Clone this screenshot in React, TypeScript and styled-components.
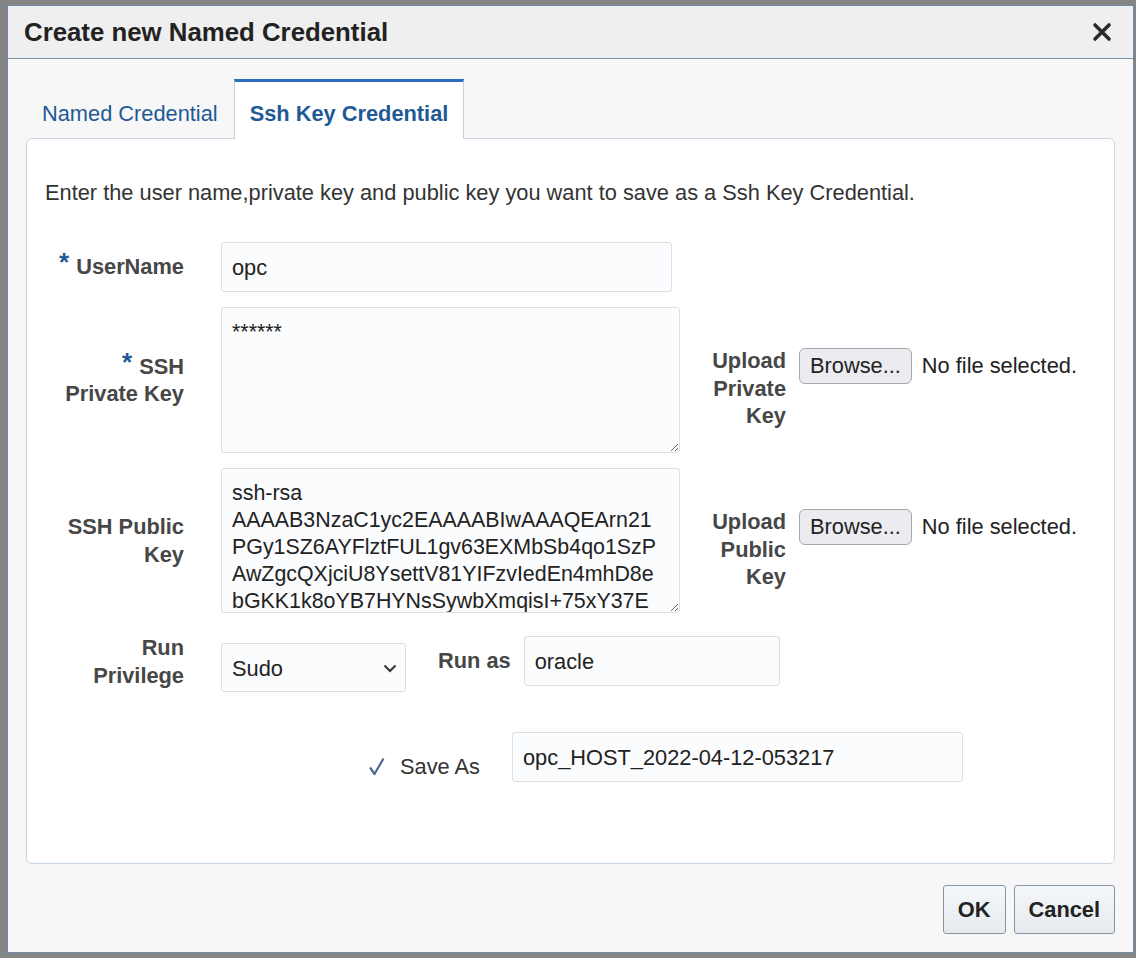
import { ReactElement } from "react";
import styled, { createGlobalStyle } from "styled-components";

const GlobalStyle = createGlobalStyle`
  * {
    box-sizing: border-box;
  }
  html,
  body {
    margin: 0;
    padding: 0;
  }
  body {
    font-family: "Liberation Sans", Arial, Helvetica, sans-serif;
    font-size: 21.8px;
    color: #333;
  }
`;

const Backdrop = styled.div`
  width: 100vw;
  height: 100vh;
  padding: 5px 2px 5px 7px;
  background: #858585;
  display: flex;
`;

const Dialog = styled.section`
  flex: 1;
  display: flex;
  flex-direction: column;
  border: 1px solid #6f8aa8;
  background: #f7f7f7;
`;

const TitleBar = styled.header`
  height: 53px;
  display: flex;
  align-items: center;
  justify-content: space-between;
  padding: 0 21px 0 16px;
  background: #efefef;
  border-bottom: 1px solid #7a93ad;
`;

const Title = styled.h1`
  margin: 0;
  font-size: 25.8px;
  line-height: 52px;
  font-weight: bold;
  color: #222;
`;

const CloseButton = styled.button`
  width: 20px;
  height: 20px;
  padding: 0;
  border: 0;
  background: none;
  display: flex;
  align-items: center;
  justify-content: center;
  cursor: pointer;
`;

const TabRow = styled.nav`
  display: flex;
  padding: 20px 18px 0;
`;

const Tab = styled.div<{ $active?: boolean }>`
  position: relative;
  z-index: 1;
  height: 60px;
  padding: 18px 15px 0;
  line-height: 27px;
  color: #1f5a96;
  font-weight: ${({ $active }) => ($active ? "bold" : "normal")};
  background: ${({ $active }) => ($active ? "#fff" : "transparent")};
  border-top: 3px solid ${({ $active }) => ($active ? "#2a6ebd" : "transparent")};
  border-left: 1px solid ${({ $active }) => ($active ? "#c9d0d8" : "transparent")};
  border-right: 1px solid ${({ $active }) => ($active ? "#c9d0d8" : "transparent")};
  cursor: pointer;
`;

const Panel = styled.div`
  flex: 1;
  margin: -1px 18px 0;
  padding: 40px 18px 0;
  background: #fff;
  border: 1px solid #c9d7e4;
  border-radius: 6px;
`;

const Intro = styled.p`
  margin: 0;
  line-height: 27px;
  color: #333;
`;

const Form = styled.div`
  display: flex;
  flex-direction: column;
  margin-top: 36px;
`;

const Row = styled.div<{ $top?: number }>`
  display: flex;
  align-items: center;
  margin-top: ${({ $top }) => $top ?? 0}px;
`;

const Label = styled.label<{ $lift?: number }>`
  width: 139px;
  flex: none;
  margin: ${({ $lift }) => -($lift ?? 0)}px 37px 0 0;
  text-align: right;
  font-weight: bold;
  line-height: 27.5px;
  color: #474747;
`;

const Req = styled.span`
  font-size: 26px;
  color: #1f5a96;
  vertical-align: 3px;
  line-height: 0;
  margin-right: 7px;
`;

const TextInput = styled.input<{ $width: number }>`
  width: ${({ $width }) => $width}px;
  height: 50px;
  padding: 2px 10px 0;
  font: inherit;
  color: #222;
  background: #fbfcfd;
  border: 1px solid #dcdfe3;
  border-radius: 3px;
  outline: none;
`;

const KeyArea = styled.textarea<{ $height: number }>`
  width: 459px;
  height: ${({ $height }) => $height}px;
  padding: 11px 10px 10px;
  font: inherit;
  font-size: 21.4px;
  line-height: 27px;
  color: #222;
  background: #fbfcfd;
  border: 1px solid #dcdfe3;
  border-radius: 3px;
  outline: none;
  white-space: pre;
  overflow: hidden;
  resize: both;
  scrollbar-width: none;
`;

const Upload = styled.div`
  align-self: flex-start;
  margin: 40px 0 0 32px;
  display: flex;
  align-items: flex-start;
`;

const UploadLabel = styled.span`
  width: 74px;
  text-align: right;
  font-weight: bold;
  line-height: 27.5px;
  color: #474747;
`;

const BrowseButton = styled.button`
  height: 36px;
  margin: 1px 0 0 13px;
  padding: 0 10px;
  font: inherit;
  color: #222;
  background: #ececf0;
  border: 1px solid #a6a6ae;
  border-radius: 6px;
`;

const FileName = styled.span`
  margin: 1px 0 0 10px;
  line-height: 36px;
  color: #222;
`;

const Field = styled.div`
  display: flex;
  align-items: flex-start;
`;

const SelectBox = styled.div`
  position: relative;
  margin-top: 7px;
  width: 185px;
  height: 49px;
`;

const Select = styled.select`
  width: 100%;
  height: 100%;
  padding: 2px 34px 0 10px;
  font: inherit;
  color: #222;
  background: #fbfcfd;
  border: 1px solid #dcdfe3;
  border-radius: 3px;
  appearance: none;
  outline: none;
`;

const Chevron = styled.svg`
  position: absolute;
  right: 9px;
  top: 21px;
  pointer-events: none;
`;

const RunAs = styled.div`
  display: flex;
  align-items: center;
  margin-left: 32px;
`;

const InlineLabel = styled.label`
  margin-right: 13px;
  font-weight: bold;
  line-height: 27.5px;
  color: #474747;
`;

const SaveRow = styled.div`
  display: flex;
  align-items: flex-end;
  margin-top: 40px;
  padding-left: 323px;
`;

const CheckMark = styled.svg`
  margin-bottom: 6px;
`;

const SaveLabel = styled.label`
  margin: 0 32px 2px 15px;
  line-height: 27px;
  color: #333;
`;

const Footer = styled.footer`
  display: flex;
  justify-content: flex-end;
  gap: 8px;
  padding: 21px 18px 18px;
`;

const DialogButton = styled.button`
  height: 49px;
  padding: 0 14px;
  font: inherit;
  font-weight: bold;
  color: #222;
  background: linear-gradient(#f5f7f9, #e6eaee);
  border: 1px solid #8595a8;
  border-radius: 3px;
  cursor: pointer;
`;

const publicKey = [
  "ssh-rsa",
  "AAAAB3NzaC1yc2EAAAABIwAAAQEArn21",
  "PGy1SZ6AYFlztFUL1gv63EXMbSb4qo1SzP",
  "AwZgcQXjciU8YsettV81YIFzvIedEn4mhD8e",
  "bGKK1k8oYB7HYNsSywbXmqisI+75xY37E",
].join("\n");

const App = (): ReactElement => {
  return (
    <Backdrop>
      <GlobalStyle />
      <Dialog>
        <TitleBar>
          <Title>Create new Named Credential</Title>
          <CloseButton aria-label="Close">
            <svg width="20" height="20" viewBox="0 0 20 20">
              <path
                d="M3 3 L17 17 M17 3 L3 17"
                stroke="#2b2b2b"
                strokeWidth="3.6"
                strokeLinecap="round"
              />
            </svg>
          </CloseButton>
        </TitleBar>

        <TabRow>
          <Tab>Named Credential</Tab>
          <Tab $active>Ssh Key Credential</Tab>
        </TabRow>

        <Panel>
          <Intro>
            Enter the user name,private key and public key you want to save as
            a Ssh Key Credential.
          </Intro>

          <Form>
            <Row>
              <Label>
                <Req>*</Req>UserName
              </Label>
              <TextInput $width={451} defaultValue="opc" />
            </Row>

            <Row $top={15}>
              <Label>
                <Req>*</Req>SSH
                <br />
                Private Key
              </Label>
              <KeyArea $height={146} defaultValue="******" />
              <Upload>
                <UploadLabel>
                  Upload
                  <br />
                  Private
                  <br />
                  Key
                </UploadLabel>
                <BrowseButton>Browse...</BrowseButton>
                <FileName>No file selected.</FileName>
              </Upload>
            </Row>

            <Row $top={15}>
              <Label>
                SSH Public
                <br />
                Key
              </Label>
              <KeyArea $height={145} defaultValue={publicKey} />
              <Upload>
                <UploadLabel>
                  Upload
                  <br />
                  Public
                  <br />
                  Key
                </UploadLabel>
                <BrowseButton>Browse...</BrowseButton>
                <FileName>No file selected.</FileName>
              </Upload>
            </Row>

            <Row $top={23}>
              <Label $lift={5}>
                Run
                <br />
                Privilege
              </Label>
              <Field>
                <SelectBox>
                  <Select defaultValue="Sudo">
                    <option>None</option>
                    <option>Sudo</option>
                    <option>PowerBroker</option>
                  </Select>
                  <Chevron width="14" height="9" viewBox="0 0 14 9">
                    <path
                      d="M1.5 1.5 L7 7 L12.5 1.5"
                      fill="none"
                      stroke="#333"
                      strokeWidth="2"
                    />
                  </Chevron>
                </SelectBox>
                <RunAs>
                  <InlineLabel>Run as</InlineLabel>
                  <TextInput $width={256} defaultValue="oracle" />
                </RunAs>
              </Field>
            </Row>

            <SaveRow>
              <CheckMark width="17" height="19" viewBox="0 0 17 19">
                <path
                  d="M2 10.5 L6.5 17 L15.5 1.5"
                  fill="none"
                  stroke="#4d6898"
                  strokeWidth="2.2"
                  strokeLinejoin="round"
                />
              </CheckMark>
              <SaveLabel>Save As</SaveLabel>
              <TextInput $width={451} defaultValue="opc_HOST_2022-04-12-053217" />
            </SaveRow>
          </Form>
        </Panel>

        <Footer>
          <DialogButton>OK</DialogButton>
          <DialogButton>Cancel</DialogButton>
        </Footer>
      </Dialog>
    </Backdrop>
  );
};

export default App;
